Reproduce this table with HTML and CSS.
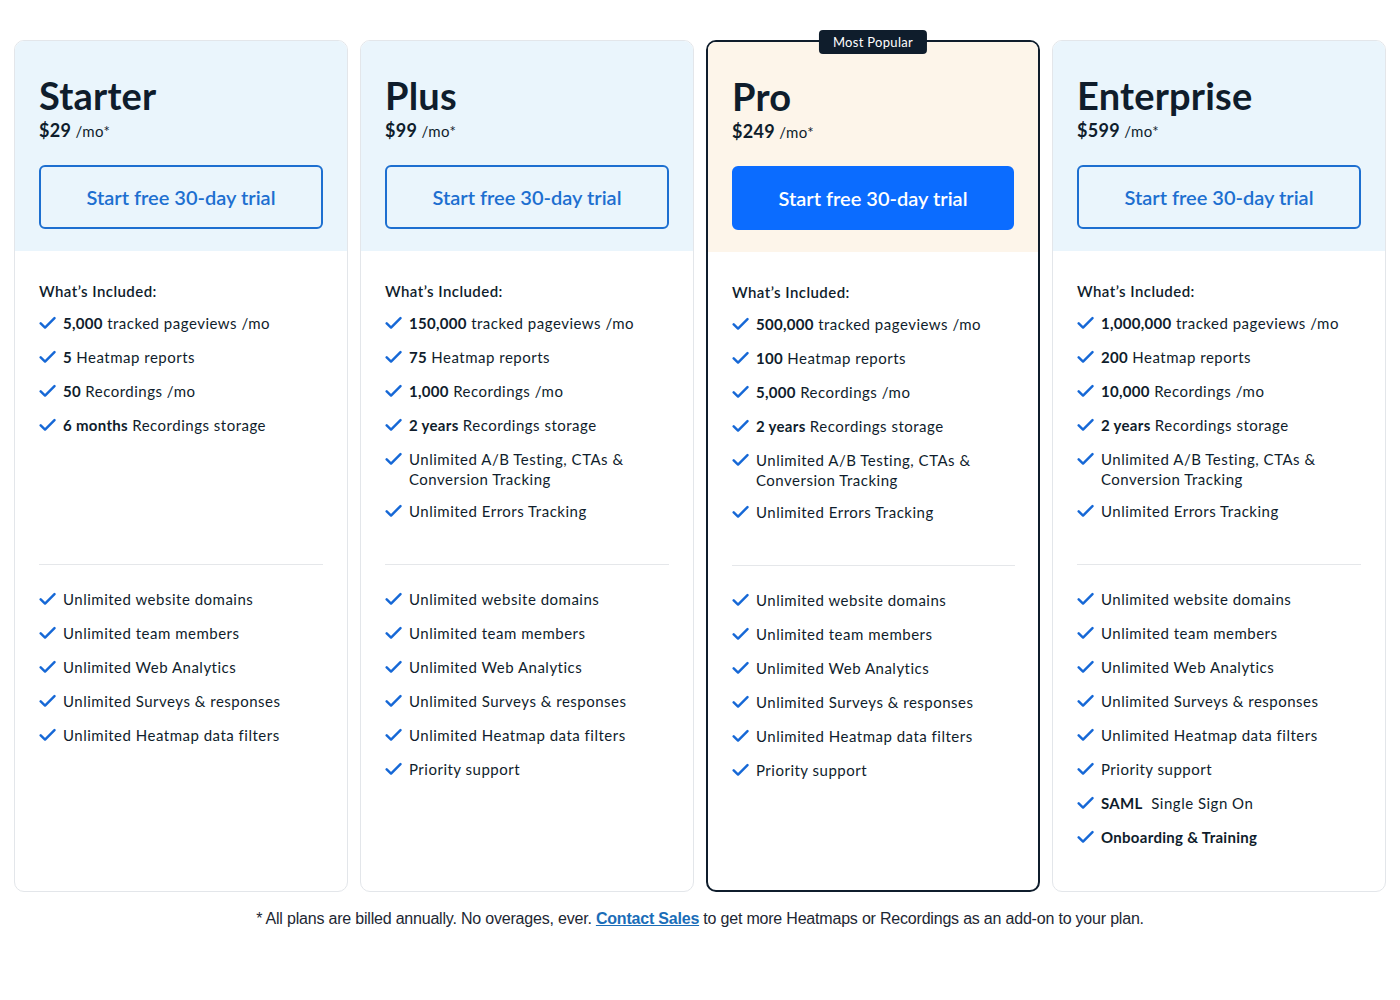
FILE: index.html
```html
<!DOCTYPE html>
<html lang="en">
<head>
<meta charset="utf-8">
<title>Pricing</title>
<link rel="stylesheet" href="styles.css">
</head>
<body>
<svg width="0" height="0" class="defs">
  <symbol id="chk" viewBox="0 0 18 14">
    <path d="M1.8 7.4 L6.4 11.8 L16.4 1.8" fill="none" stroke="currentColor" stroke-width="2.6" stroke-linecap="round" stroke-linejoin="round"/>
  </symbol>
</svg>
<main class="plans">
  <section class="card">
    <div class="head">
      <h2 class="name">Starter</h2>
      <p class="price"><b>$29</b> /mo*</p>
      <a class="btn">Start free 30-day trial</a>
    </div>
    <div class="body">
      <div class="top">
        <h3 class="inc">What’s Included:</h3>
        <ul class="list">
          <li><svg class="ic"><use href="#chk"/></svg><span><b>5,000</b> tracked pageviews /mo</span></li>
          <li><svg class="ic"><use href="#chk"/></svg><span><b>5</b> Heatmap reports</span></li>
          <li><svg class="ic"><use href="#chk"/></svg><span><b>50</b> Recordings /mo</span></li>
          <li><svg class="ic"><use href="#chk"/></svg><span><b>6 months</b> Recordings storage</span></li>
        </ul>
      </div>
      <ul class="list bottom">
        <li><svg class="ic"><use href="#chk"/></svg><span>Unlimited website domains</span></li>
        <li><svg class="ic"><use href="#chk"/></svg><span>Unlimited team members</span></li>
        <li><svg class="ic"><use href="#chk"/></svg><span>Unlimited Web Analytics</span></li>
        <li><svg class="ic"><use href="#chk"/></svg><span>Unlimited Surveys &amp; responses</span></li>
        <li><svg class="ic"><use href="#chk"/></svg><span>Unlimited Heatmap data filters</span></li>
      </ul>
    </div>
  </section>

  <section class="card">
    <div class="head">
      <h2 class="name">Plus</h2>
      <p class="price"><b>$99</b> /mo*</p>
      <a class="btn">Start free 30-day trial</a>
    </div>
    <div class="body">
      <div class="top">
        <h3 class="inc">What’s Included:</h3>
        <ul class="list">
          <li><svg class="ic"><use href="#chk"/></svg><span><b>150,000</b> tracked pageviews /mo</span></li>
          <li><svg class="ic"><use href="#chk"/></svg><span><b>75</b> Heatmap reports</span></li>
          <li><svg class="ic"><use href="#chk"/></svg><span><b>1,000</b> Recordings /mo</span></li>
          <li><svg class="ic"><use href="#chk"/></svg><span><b>2 years</b> Recordings storage</span></li>
          <li class="wrap"><svg class="ic"><use href="#chk"/></svg><span>Unlimited A/B Testing, CTAs &amp;<br>Conversion Tracking</span></li>
          <li><svg class="ic"><use href="#chk"/></svg><span>Unlimited Errors Tracking</span></li>
        </ul>
      </div>
      <ul class="list bottom">
        <li><svg class="ic"><use href="#chk"/></svg><span>Unlimited website domains</span></li>
        <li><svg class="ic"><use href="#chk"/></svg><span>Unlimited team members</span></li>
        <li><svg class="ic"><use href="#chk"/></svg><span>Unlimited Web Analytics</span></li>
        <li><svg class="ic"><use href="#chk"/></svg><span>Unlimited Surveys &amp; responses</span></li>
        <li><svg class="ic"><use href="#chk"/></svg><span>Unlimited Heatmap data filters</span></li>
        <li><svg class="ic"><use href="#chk"/></svg><span>Priority support</span></li>
      </ul>
    </div>
  </section>

  <section class="card pro">
    <span class="badge">Most Popular</span>
    <div class="head">
      <h2 class="name">Pro</h2>
      <p class="price"><b>$249</b> /mo*</p>
      <a class="btn solid">Start free 30-day trial</a>
    </div>
    <div class="body">
      <div class="top">
        <h3 class="inc">What’s Included:</h3>
        <ul class="list">
          <li><svg class="ic"><use href="#chk"/></svg><span><b>500,000</b> tracked pageviews /mo</span></li>
          <li><svg class="ic"><use href="#chk"/></svg><span><b>100</b> Heatmap reports</span></li>
          <li><svg class="ic"><use href="#chk"/></svg><span><b>5,000</b> Recordings /mo</span></li>
          <li><svg class="ic"><use href="#chk"/></svg><span><b>2 years</b> Recordings storage</span></li>
          <li class="wrap"><svg class="ic"><use href="#chk"/></svg><span>Unlimited A/B Testing, CTAs &amp;<br>Conversion Tracking</span></li>
          <li><svg class="ic"><use href="#chk"/></svg><span>Unlimited Errors Tracking</span></li>
        </ul>
      </div>
      <ul class="list bottom">
        <li><svg class="ic"><use href="#chk"/></svg><span>Unlimited website domains</span></li>
        <li><svg class="ic"><use href="#chk"/></svg><span>Unlimited team members</span></li>
        <li><svg class="ic"><use href="#chk"/></svg><span>Unlimited Web Analytics</span></li>
        <li><svg class="ic"><use href="#chk"/></svg><span>Unlimited Surveys &amp; responses</span></li>
        <li><svg class="ic"><use href="#chk"/></svg><span>Unlimited Heatmap data filters</span></li>
        <li><svg class="ic"><use href="#chk"/></svg><span>Priority support</span></li>
      </ul>
    </div>
  </section>

  <section class="card">
    <div class="head">
      <h2 class="name">Enterprise</h2>
      <p class="price"><b>$599</b> /mo*</p>
      <a class="btn">Start free 30-day trial</a>
    </div>
    <div class="body">
      <div class="top">
        <h3 class="inc">What’s Included:</h3>
        <ul class="list">
          <li><svg class="ic"><use href="#chk"/></svg><span><b>1,000,000</b> tracked pageviews /mo</span></li>
          <li><svg class="ic"><use href="#chk"/></svg><span><b>200</b> Heatmap reports</span></li>
          <li><svg class="ic"><use href="#chk"/></svg><span><b>10,000</b> Recordings /mo</span></li>
          <li><svg class="ic"><use href="#chk"/></svg><span><b>2 years</b> Recordings storage</span></li>
          <li class="wrap"><svg class="ic"><use href="#chk"/></svg><span>Unlimited A/B Testing, CTAs &amp;<br>Conversion Tracking</span></li>
          <li><svg class="ic"><use href="#chk"/></svg><span>Unlimited Errors Tracking</span></li>
        </ul>
      </div>
      <ul class="list bottom">
        <li><svg class="ic"><use href="#chk"/></svg><span>Unlimited website domains</span></li>
        <li><svg class="ic"><use href="#chk"/></svg><span>Unlimited team members</span></li>
        <li><svg class="ic"><use href="#chk"/></svg><span>Unlimited Web Analytics</span></li>
        <li><svg class="ic"><use href="#chk"/></svg><span>Unlimited Surveys &amp; responses</span></li>
        <li><svg class="ic"><use href="#chk"/></svg><span>Unlimited Heatmap data filters</span></li>
        <li><svg class="ic"><use href="#chk"/></svg><span>Priority support</span></li>
        <li><svg class="ic"><use href="#chk"/></svg><span><b>SAML</b>&nbsp; Single Sign On</span></li>
        <li><svg class="ic"><use href="#chk"/></svg><span><b>Onboarding &amp; Training</b></span></li>
      </ul>
    </div>
  </section>
</main>
<p class="note">* All plans are billed annually. No overages, ever. <a class="link">Contact Sales</a> to get more Heatmaps or Recordings as an add-on to your plan.</p>
</body>
</html>
```

FILE: styles.css
```css
* { box-sizing: border-box; }
html, body { margin: 0; background: #fff; }
body {
  font-family: Lato, "Noto Sans", sans-serif;
  color: #0f1d2c;
  padding: 40px 14px 0 14px;
}
.defs { position: absolute; width: 0; height: 0; overflow: hidden; }
.plans {
  display: grid;
  grid-template-columns: repeat(4, 1fr);
  gap: 12px;
}
.card {
  position: relative;
  height: 852px;
  border: 1px solid #e3e6ea;
  border-radius: 10px;
  display: flex;
  flex-direction: column;
}
.card.pro { border: 2px solid #0f1d2c; }
.head {
  background: #eaf5fc;
  height: 210px;
  padding: 34px 24px 0 24px;
  border-radius: 9px 9px 0 0;
}
.pro .head { background: #fdf5ea; border-radius: 8px 8px 0 0; }
.name {
  margin: 0;
  font-size: 38px;
  line-height: 40px;
  font-weight: 700;
  letter-spacing: 0.2px;
}
.price {
  margin: 5px 0 0;
  font-size: 15px;
  line-height: 20px;
  letter-spacing: 0.4px;
}
.price b { font-size: 18px; font-weight: 700; letter-spacing: 0.3px; }
.btn {
  display: flex;
  align-items: center;
  justify-content: center;
  margin-top: 24px;
  height: 64px;
  border: 2px solid #1d6fd0;
  border-radius: 6px;
  color: #1d6fd0;
  font-size: 20px;
  font-weight: 600;
  text-decoration: none;
}
.btn.solid {
  background: #0b6cff;
  border-color: #0b6cff;
  color: #fff;
}
.body {
  padding: 31px 24px 0 24px;
}
.pro .body { padding-right: 23px; }
.top {
  height: 283px;
  border-bottom: 1px solid #e5e7ea;
}
.inc {
  margin: 0;
  font-size: 15px;
  line-height: 18px;
  font-weight: 600;
  letter-spacing: 0.45px;
}
.list {
  list-style: none;
  margin: 13px 0 0;
  padding: 0;
  display: flex;
  flex-direction: column;
  gap: 14px;
}
.list.bottom { margin-top: 24px; }
.list li {
  display: flex;
  align-items: flex-start;
  gap: 7px;
  font-size: 15px;
  line-height: 20px;
  letter-spacing: 0.5px;
}
.list li.wrap { margin-bottom: -2px; }
.list li b { font-weight: 700; letter-spacing: 0.3px; }
.ic {
  flex: none;
  width: 17px;
  height: 14px;
  margin-top: 3px;
  color: #1668d6;
}
.badge {
  position: absolute;
  top: -12px;
  left: 50%;
  transform: translateX(-50%);
  background: #0f1d2c;
  color: #fff;
  font-size: 13px;
  line-height: 24px;
  padding: 0 14px;
  letter-spacing: 0.3px;
  border-radius: 4px;
  white-space: nowrap;
}
.note {
  margin: 17px 0 0;
  text-align: center;
  font-family: "Liberation Sans", Arial, sans-serif;
  font-size: 16px;
  line-height: 20px;
  letter-spacing: -0.2px;
  color: #1d2733;
}
.link {
  color: #1a6db8;
  font-weight: 700;
  text-decoration: underline;
}
```
